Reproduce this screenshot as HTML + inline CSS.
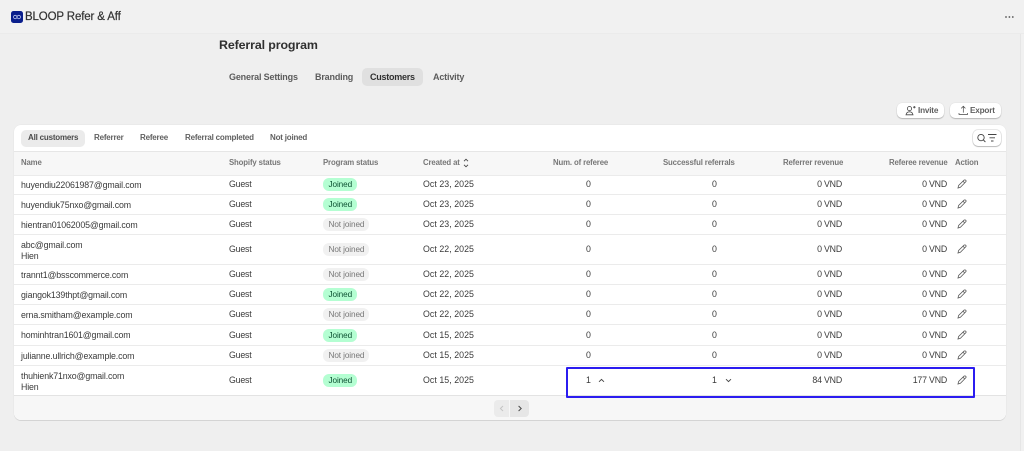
<!DOCTYPE html>
<html><head><meta charset="utf-8"><style>
html,body{margin:0;padding:0;width:1024px;height:451px;overflow:hidden;background:#efefef;font-family:"Liberation Sans",sans-serif;color:#303030;}
*{box-sizing:border-box}
.a{position:absolute;white-space:nowrap}
#top{position:absolute;left:0;top:0;width:1024px;height:34px;background:#f1f1f1;border-bottom:1px solid #ebebeb}
#sb{position:absolute;left:1020px;top:34px;width:4px;height:417px;background:#f1f1f1;border-left:1px solid #e6e6e6}
#card{position:absolute;left:14px;top:125px;width:992px;height:295px;background:#fff;border-radius:7px;box-shadow:0 1px 0 #d4d4d4,0 0 0 .5px #e6e6e6;overflow:hidden}
#hd{position:absolute;left:0;top:26px;width:992px;height:24px;background:#f7f7f7;border-top:1px solid #e6e6e6;border-bottom:0}
#ft{position:absolute;left:0;top:270px;width:992px;height:25px;background:#f7f7f7;border-top:1px solid #e3e3e3}
.l{position:absolute;left:14px;width:992px;height:1px;background:#ebebeb}
.tab{font-size:9px;font-weight:bold;color:#5c5c5c;letter-spacing:-.17px;line-height:12px}
.th{font-size:7.8px;font-weight:bold;color:#777;letter-spacing:-.14px;line-height:10px}
.f{font-size:8.2px;font-weight:bold;color:#616161;letter-spacing:-.2px;line-height:10px}
.e{left:21px;font-size:8.8px;color:#3a3a3a;letter-spacing:-.13px;line-height:10px}
.g{left:229px;font-size:8.8px;color:#3a3a3a;letter-spacing:-.19px;line-height:10px}
.d{left:423px;font-size:8.8px;color:#3a3a3a;letter-spacing:.05px;line-height:10px}
.n{font-size:8.8px;color:#3a3a3a;line-height:10px;letter-spacing:.1px}
.r{font-size:8.8px;color:#3a3a3a;line-height:10px;text-align:right;letter-spacing:-.2px}
.b{left:323px;height:13px;border-radius:6px;font-size:8.2px;line-height:13px;padding:0 5.5px;letter-spacing:-.1px}
.j{width:34px;background:#b4fed2;color:#0c5132}
.x{width:46px;background:#f1f1f1;color:#777}
.btn{background:#fff;border-radius:5px;box-shadow:0 1px 1px rgba(0,0,0,.22),0 0 0 .5px #e3e3e3}
svg{position:absolute;overflow:visible}
</style></head><body>
<div id="top"></div><div id="sb"></div>
<div class="a" style="left:11px;top:11px;width:12px;height:12px;background:#0a1e8c;border-radius:2.5px"></div>
<svg style="left:11px;top:11px" width="12" height="12" viewBox="0 0 12 12" fill="none" stroke="#b9c4ee" stroke-width=".8"><circle cx="4.2" cy="6" r="1.7"/><circle cx="7.8" cy="6" r="1.7"/></svg>
<div class="a" style="left:25px;top:10px;font-size:11.5px;line-height:14px;color:#333;letter-spacing:-.14px;font-weight:400;-webkit-text-stroke:.2px #333">BLOOP Refer &amp; Aff</div>
<svg style="left:1005px;top:16px" width="10" height="3"><circle cx="1" cy="1" r=".9" fill="#555"/><circle cx="4.4" cy="1" r=".9" fill="#555"/><circle cx="7.8" cy="1" r=".9" fill="#555"/></svg>

<div class="a" style="left:219px;top:37px;font-size:12.4px;font-weight:bold;line-height:16px;color:#303030;letter-spacing:-.11px">Referral program</div>

<div class="a tab" style="left:229px;top:71px">General Settings</div>
<div class="a tab" style="left:315px;top:71px">Branding</div>
<div class="a" style="left:362px;top:68px;width:61px;height:18px;background:#e0e0e0;border-radius:5px"></div>
<div class="a tab" style="left:370px;top:71px;color:#303030;letter-spacing:-.25px">Customers</div>
<div class="a tab" style="left:433px;top:71px">Activity</div>

<div class="a btn" style="left:897px;top:103px;width:47px;height:15px"></div>
<svg style="left:905px;top:105px" width="11" height="11" viewBox="0 0 11 11" fill="none" stroke="#444" stroke-width=".8"><circle cx="4.5" cy="3.6" r="2.1"/><path d="M1 9.8c.4-2 1.8-3 3.5-3s3.1 1 3.5 3zM8 2.2h2.6M9.3 1v2.4"/></svg>
<div class="a f" style="left:918px;top:106px">Invite</div>
<div class="a btn" style="left:950px;top:103px;width:51px;height:15px"></div>
<svg style="left:958px;top:105px" width="11" height="11" viewBox="0 0 11 11" fill="none" stroke="#444" stroke-width=".7"><path d="M5.3 7.6V1.4M3.2 3.4l2.1-2.1 2.1 2.1M1 8v1.4h8.6V8"/></svg>
<div class="a f" style="left:970px;top:106px">Export</div>

<div id="card"><div id="hd"></div><div id="ft"></div></div>

<div class="a" style="left:21px;top:130px;width:64px;height:17px;background:#ebebeb;border-radius:5px"></div>
<div class="a f" style="left:28px;top:133px;color:#4a4a4a;font-size:8px">All customers</div>
<div class="a f" style="left:94px;top:133px;font-size:8px">Referrer</div>
<div class="a f" style="left:140px;top:133px;font-size:8px">Referee</div>
<div class="a f" style="left:185px;top:133px;font-size:8px">Referral completed</div>
<div class="a f" style="left:270px;top:133px;font-size:8px">Not joined</div>
<div class="a btn" style="left:973px;top:130px;width:28px;height:16px;box-shadow:0 1px 1px rgba(0,0,0,.2),0 0 0 .7px #e0e0e0"></div>
<svg style="left:976px;top:133px" width="22" height="10" viewBox="0 0 22 10" fill="none" stroke="#444" stroke-width=".9"><circle cx="5" cy="4.6" r="3.2"/><path d="M7.4 7l2 2M12 1.5h8.5M13.5 4.8h5.5M15 8h2.5"/></svg>

<div class="a th" style="left:21px;top:158px">Name</div>
<div class="a th" style="left:229px;top:158px">Shopify status</div>
<div class="a th" style="left:323px;top:158px">Program status</div>
<div class="a th" style="left:423px;top:158px">Created at</div>
<svg style="left:463px;top:158px" width="6" height="10" viewBox="0 0 6 10" fill="none" stroke="#444" stroke-width=".9"><path d="M1 3.2 3 1.2l2 2M1 6.8l2 2 2-2"/></svg>
<div class="a th" style="left:553px;top:158px">Num. of referee</div>
<div class="a th" style="left:663px;top:158px">Successful referrals</div>
<div class="a th" style="left:783px;top:158px">Referrer revenue</div>
<div class="a th" style="left:889px;top:158px">Referee revenue</div>
<div class="a th" style="left:955px;top:158px">Action</div>

<div class="l" style="top:175px"></div><div class="l" style="top:194px"></div><div class="l" style="top:214px"></div><div class="l" style="top:234px"></div><div class="l" style="top:264px"></div><div class="l" style="top:284px"></div><div class="l" style="top:304px"></div><div class="l" style="top:324px"></div><div class="l" style="top:345px"></div><div class="l" style="top:365px"></div>

<div class="a e" style="top:180px">huyendiu22061987@gmail.com</div><div class="a g" style="top:179px">Guest</div><div class="a b j" style="top:178px">Joined</div><div class="a d" style="top:179px">Oct 23, 2025</div><div class="a n" style="left:586px;top:179px">0</div><div class="a n" style="left:712px;top:179px">0</div><div class="a r" style="left:782px;width:60px;top:179px">0 VND</div><div class="a r" style="left:887px;width:60px;top:179px">0 VND</div>
<div class="a e" style="top:200px">huyendiuk75nxo@gmail.com</div><div class="a g" style="top:199px">Guest</div><div class="a b j" style="top:198px">Joined</div><div class="a d" style="top:199px">Oct 23, 2025</div><div class="a n" style="left:586px;top:199px">0</div><div class="a n" style="left:712px;top:199px">0</div><div class="a r" style="left:782px;width:60px;top:199px">0 VND</div><div class="a r" style="left:887px;width:60px;top:199px">0 VND</div>
<div class="a e" style="top:220px">hientran01062005@gmail.com</div><div class="a g" style="top:219px">Guest</div><div class="a b x" style="top:218px">Not joined</div><div class="a d" style="top:219px">Oct 23, 2025</div><div class="a n" style="left:586px;top:219px">0</div><div class="a n" style="left:712px;top:219px">0</div><div class="a r" style="left:782px;width:60px;top:219px">0 VND</div><div class="a r" style="left:887px;width:60px;top:219px">0 VND</div>
<div class="a e" style="top:240px">abc@gmail.com</div><div class="a e" style="top:251px">Hien</div><div class="a g" style="top:244px">Guest</div><div class="a b x" style="top:243px">Not joined</div><div class="a d" style="top:244px">Oct 22, 2025</div><div class="a n" style="left:586px;top:244px">0</div><div class="a n" style="left:712px;top:244px">0</div><div class="a r" style="left:782px;width:60px;top:244px">0 VND</div><div class="a r" style="left:887px;width:60px;top:244px">0 VND</div>
<div class="a e" style="top:270px">trannt1@bsscommerce.com</div><div class="a g" style="top:269px">Guest</div><div class="a b x" style="top:268px">Not joined</div><div class="a d" style="top:269px">Oct 22, 2025</div><div class="a n" style="left:586px;top:269px">0</div><div class="a n" style="left:712px;top:269px">0</div><div class="a r" style="left:782px;width:60px;top:269px">0 VND</div><div class="a r" style="left:887px;width:60px;top:269px">0 VND</div>
<div class="a e" style="top:290px">giangok139thpt@gmail.com</div><div class="a g" style="top:289px">Guest</div><div class="a b j" style="top:288px">Joined</div><div class="a d" style="top:289px">Oct 22, 2025</div><div class="a n" style="left:586px;top:289px">0</div><div class="a n" style="left:712px;top:289px">0</div><div class="a r" style="left:782px;width:60px;top:289px">0 VND</div><div class="a r" style="left:887px;width:60px;top:289px">0 VND</div>
<div class="a e" style="top:310px">erna.smitham@example.com</div><div class="a g" style="top:309px">Guest</div><div class="a b x" style="top:308px">Not joined</div><div class="a d" style="top:309px">Oct 22, 2025</div><div class="a n" style="left:586px;top:309px">0</div><div class="a n" style="left:712px;top:309px">0</div><div class="a r" style="left:782px;width:60px;top:309px">0 VND</div><div class="a r" style="left:887px;width:60px;top:309px">0 VND</div>
<div class="a e" style="top:330px">hominhtran1601@gmail.com</div><div class="a g" style="top:330px">Guest</div><div class="a b j" style="top:329px">Joined</div><div class="a d" style="top:330px">Oct 15, 2025</div><div class="a n" style="left:586px;top:330px">0</div><div class="a n" style="left:712px;top:330px">0</div><div class="a r" style="left:782px;width:60px;top:330px">0 VND</div><div class="a r" style="left:887px;width:60px;top:330px">0 VND</div>
<div class="a e" style="top:351px">julianne.ullrich@example.com</div><div class="a g" style="top:350px">Guest</div><div class="a b x" style="top:349px">Not joined</div><div class="a d" style="top:350px">Oct 15, 2025</div><div class="a n" style="left:586px;top:350px">0</div><div class="a n" style="left:712px;top:350px">0</div><div class="a r" style="left:782px;width:60px;top:350px">0 VND</div><div class="a r" style="left:887px;width:60px;top:350px">0 VND</div>
<div class="a e" style="top:371px">thuhienk71nxo@gmail.com</div><div class="a e" style="top:382px">Hien</div><div class="a g" style="top:375px">Guest</div><div class="a b j" style="top:374px">Joined</div><div class="a d" style="top:375px">Oct 15, 2025</div><div class="a n" style="left:586px;top:375px">1</div><div class="a n" style="left:712px;top:375px">1</div><div class="a r" style="left:782px;width:60px;top:375px">84 VND</div><div class="a r" style="left:887px;width:60px;top:375px">177 VND</div>

<svg style="left:957px;top:179px" width="10" height="10" viewBox="0 0 10 10" fill="none" stroke="#5a5a5a" stroke-width=".8"><path d="M1 9l.6-2.6L7 1.2a1.1 1.1 0 0 1 1.7 1.7L3.4 8.3zM6 2.2l1.8 1.8"/></svg>
<svg style="left:957px;top:199px" width="10" height="10" viewBox="0 0 10 10" fill="none" stroke="#5a5a5a" stroke-width=".8"><path d="M1 9l.6-2.6L7 1.2a1.1 1.1 0 0 1 1.7 1.7L3.4 8.3zM6 2.2l1.8 1.8"/></svg>
<svg style="left:957px;top:219px" width="10" height="10" viewBox="0 0 10 10" fill="none" stroke="#5a5a5a" stroke-width=".8"><path d="M1 9l.6-2.6L7 1.2a1.1 1.1 0 0 1 1.7 1.7L3.4 8.3zM6 2.2l1.8 1.8"/></svg>
<svg style="left:957px;top:244px" width="10" height="10" viewBox="0 0 10 10" fill="none" stroke="#5a5a5a" stroke-width=".8"><path d="M1 9l.6-2.6L7 1.2a1.1 1.1 0 0 1 1.7 1.7L3.4 8.3zM6 2.2l1.8 1.8"/></svg>
<svg style="left:957px;top:269px" width="10" height="10" viewBox="0 0 10 10" fill="none" stroke="#5a5a5a" stroke-width=".8"><path d="M1 9l.6-2.6L7 1.2a1.1 1.1 0 0 1 1.7 1.7L3.4 8.3zM6 2.2l1.8 1.8"/></svg>
<svg style="left:957px;top:289px" width="10" height="10" viewBox="0 0 10 10" fill="none" stroke="#5a5a5a" stroke-width=".8"><path d="M1 9l.6-2.6L7 1.2a1.1 1.1 0 0 1 1.7 1.7L3.4 8.3zM6 2.2l1.8 1.8"/></svg>
<svg style="left:957px;top:309px" width="10" height="10" viewBox="0 0 10 10" fill="none" stroke="#5a5a5a" stroke-width=".8"><path d="M1 9l.6-2.6L7 1.2a1.1 1.1 0 0 1 1.7 1.7L3.4 8.3zM6 2.2l1.8 1.8"/></svg>
<svg style="left:957px;top:330px" width="10" height="10" viewBox="0 0 10 10" fill="none" stroke="#5a5a5a" stroke-width=".8"><path d="M1 9l.6-2.6L7 1.2a1.1 1.1 0 0 1 1.7 1.7L3.4 8.3zM6 2.2l1.8 1.8"/></svg>
<svg style="left:957px;top:350px" width="10" height="10" viewBox="0 0 10 10" fill="none" stroke="#5a5a5a" stroke-width=".8"><path d="M1 9l.6-2.6L7 1.2a1.1 1.1 0 0 1 1.7 1.7L3.4 8.3zM6 2.2l1.8 1.8"/></svg>
<svg style="left:957px;top:375px" width="10" height="10" viewBox="0 0 10 10" fill="none" stroke="#5a5a5a" stroke-width=".8"><path d="M1 9l.6-2.6L7 1.2a1.1 1.1 0 0 1 1.7 1.7L3.4 8.3zM6 2.2l1.8 1.8"/></svg>

<svg style="left:598px;top:378px" width="7" height="5" viewBox="0 0 7 5" fill="none" stroke="#444" stroke-width=".9"><path d="M1 3.8 3.5 1.4 6 3.8"/></svg>
<svg style="left:725px;top:378px" width="7" height="5" viewBox="0 0 7 5" fill="none" stroke="#444" stroke-width=".9"><path d="M1 1.2 3.5 3.6 6 1.2"/></svg>

<div class="a" style="left:566px;top:367px;width:409px;height:31px;border:2px solid #2b1cf0;border-radius:1px"></div>

<div class="a" style="left:494px;top:400px;width:15px;height:17px;background:#ebebeb;border-radius:4px 0 0 4px"></div>
<div class="a" style="left:510px;top:400px;width:19px;height:17px;background:#e6e6e6;border-radius:0 4px 4px 0"></div>
<svg style="left:494px;top:400px" width="35" height="17" viewBox="0 0 35 17" fill="none" stroke-width="1"><path d="M9 6 6.4 8.5 9 11" stroke="#c4c4c4"/><path d="M24.6 6l2.6 2.5-2.6 2.5" stroke="#4a4a4a"/></svg>
</body></html>
